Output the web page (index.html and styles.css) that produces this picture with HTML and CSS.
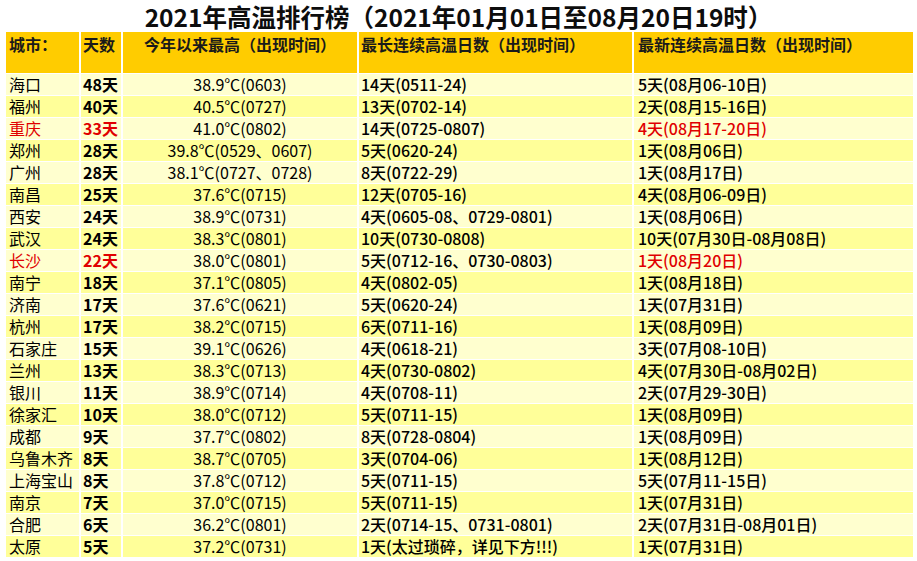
FILE: index.html
```html
<!DOCTYPE html>
<html lang="zh-CN">
<head>
<meta charset="utf-8">
<title>2021年高温排行榜</title>
<link rel="stylesheet" href="styles.css">
</head>
<body>
<h1 class="title">2021年高温排行榜（2021年01月01日至08月20日19时）</h1>
<div class="grid">
  <div class="row head">
    <div class="c city">城市：</div>
    <div class="c days">天数</div>
    <div class="c max">今年以来最高（出现时间）</div>
    <div class="c longest">最长连续高温日数（出现时间）</div>
    <div class="c latest">最新连续高温日数（出现时间）</div>
  </div>
  <div class="row pale"><div class="c city">海口</div><div class="c days">48天</div><div class="c max">38.9℃(0603)</div><div class="c longest">14天(0511-24)</div><div class="c latest">5天(08月06-10日)</div></div>
  <div class="row deep"><div class="c city">福州</div><div class="c days">40天</div><div class="c max">40.5℃(0727)</div><div class="c longest">13天(0702-14)</div><div class="c latest">2天(08月15-16日)</div></div>
  <div class="row pale"><div class="c city red">重庆</div><div class="c days red">33天</div><div class="c max">41.0℃(0802)</div><div class="c longest">14天(0725-0807)</div><div class="c latest red">4天(08月17-20日)</div></div>
  <div class="row deep"><div class="c city">郑州</div><div class="c days">28天</div><div class="c max">39.8℃(0529、0607)</div><div class="c longest">5天(0620-24)</div><div class="c latest">1天(08月06日)</div></div>
  <div class="row pale"><div class="c city">广州</div><div class="c days">28天</div><div class="c max">38.1℃(0727、0728)</div><div class="c longest">8天(0722-29)</div><div class="c latest">1天(08月17日)</div></div>
  <div class="row deep"><div class="c city">南昌</div><div class="c days">25天</div><div class="c max">37.6℃(0715)</div><div class="c longest">12天(0705-16)</div><div class="c latest">4天(08月06-09日)</div></div>
  <div class="row pale"><div class="c city">西安</div><div class="c days">24天</div><div class="c max">38.9℃(0731)</div><div class="c longest">4天(0605-08、0729-0801)</div><div class="c latest">1天(08月06日)</div></div>
  <div class="row deep"><div class="c city">武汉</div><div class="c days">24天</div><div class="c max">38.3℃(0801)</div><div class="c longest">10天(0730-0808)</div><div class="c latest">10天(07月30日-08月08日)</div></div>
  <div class="row pale"><div class="c city red">长沙</div><div class="c days red">22天</div><div class="c max">38.0℃(0801)</div><div class="c longest">5天(0712-16、0730-0803)</div><div class="c latest red">1天(08月20日)</div></div>
  <div class="row deep"><div class="c city">南宁</div><div class="c days">18天</div><div class="c max">37.1℃(0805)</div><div class="c longest">4天(0802-05)</div><div class="c latest">1天(08月18日)</div></div>
  <div class="row pale"><div class="c city">济南</div><div class="c days">17天</div><div class="c max">37.6℃(0621)</div><div class="c longest">5天(0620-24)</div><div class="c latest">1天(07月31日)</div></div>
  <div class="row deep"><div class="c city">杭州</div><div class="c days">17天</div><div class="c max">38.2℃(0715)</div><div class="c longest">6天(0711-16)</div><div class="c latest">1天(08月09日)</div></div>
  <div class="row pale"><div class="c city">石家庄</div><div class="c days">15天</div><div class="c max">39.1℃(0626)</div><div class="c longest">4天(0618-21)</div><div class="c latest">3天(07月08-10日)</div></div>
  <div class="row deep"><div class="c city">兰州</div><div class="c days">13天</div><div class="c max">38.3℃(0713)</div><div class="c longest">4天(0730-0802)</div><div class="c latest">4天(07月30日-08月02日)</div></div>
  <div class="row pale"><div class="c city">银川</div><div class="c days">11天</div><div class="c max">38.9℃(0714)</div><div class="c longest">4天(0708-11)</div><div class="c latest">2天(07月29-30日)</div></div>
  <div class="row deep"><div class="c city">徐家汇</div><div class="c days">10天</div><div class="c max">38.0℃(0712)</div><div class="c longest">5天(0711-15)</div><div class="c latest">1天(08月09日)</div></div>
  <div class="row pale"><div class="c city">成都</div><div class="c days">9天</div><div class="c max">37.7℃(0802)</div><div class="c longest">8天(0728-0804)</div><div class="c latest">1天(08月09日)</div></div>
  <div class="row deep"><div class="c city">乌鲁木齐</div><div class="c days">8天</div><div class="c max">38.7℃(0705)</div><div class="c longest">3天(0704-06)</div><div class="c latest">1天(08月12日)</div></div>
  <div class="row pale"><div class="c city">上海宝山</div><div class="c days">8天</div><div class="c max">37.8℃(0712)</div><div class="c longest">5天(0711-15)</div><div class="c latest">5天(07月11-15日)</div></div>
  <div class="row deep"><div class="c city">南京</div><div class="c days">7天</div><div class="c max">37.0℃(0715)</div><div class="c longest">5天(0711-15)</div><div class="c latest">1天(07月31日)</div></div>
  <div class="row pale"><div class="c city">合肥</div><div class="c days">6天</div><div class="c max">36.2℃(0801)</div><div class="c longest">2天(0714-15、0731-0801)</div><div class="c latest">2天(07月31日-08月01日)</div></div>
  <div class="row deep"><div class="c city">太原</div><div class="c days">5天</div><div class="c max">37.2℃(0731)</div><div class="c longest">1天(太过琐碎，详见下方!!!)</div><div class="c latest">1天(07月31日)</div></div>
</div>
</body>
</html>
```

FILE: styles.css
```css
* {
  box-sizing: border-box;
}

body {
  margin: 0;
  background: #ffffff;
  color: #111111;
  font-family: "Noto Sans CJK SC", "Noto Sans", sans-serif;
}

.title {
  margin: 0;
  height: 32px;
  padding-top: 2px;
  font-size: 24.5px;
  line-height: 30px;
  font-weight: 700;
  text-align: center;
  color: #0d0d0d;
  white-space: nowrap;
}

.grid {
  display: grid;
  grid-template-columns: 73px 40px 234px 273px 279px;
  grid-template-rows: 41px repeat(22, 21px);
  gap: 1px 2px;
  margin-left: 6px;
  width: max-content;
}

.row {
  display: contents;
}

.c {
  font-size: 16px;
  line-height: 21px;
  white-space: nowrap;
  padding: 0 3px;
  color: #000000;
}

.head .c {
  background: #ffcc00;
  font-weight: 700;
  line-height: 22px;
  padding-top: 1px;
  color: #1a1a1a;
}

.pale .c {
  background: #ffffcf;
}

.deep .c {
  background: #ffff99;
}

.city {
  font-weight: 400;
}

.days {
  font-weight: 700;
  padding-left: 2px;
}

.max {
  text-align: center;
  font-weight: 400;
}

.longest {
  font-weight: 500;
  padding-left: 2px;
}

.latest {
  font-weight: 500;
  padding-left: 4px;
}

.red {
  color: #e00000;
}
```
